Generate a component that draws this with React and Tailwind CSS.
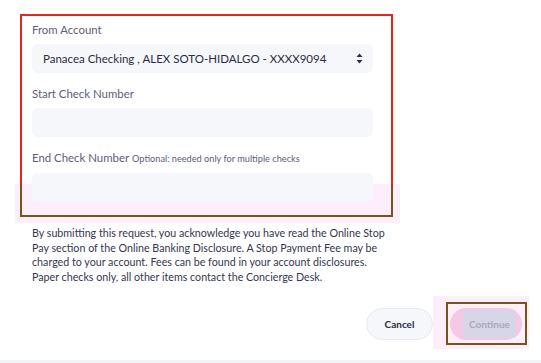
import React from "react";

function Field({ label, hint, children }) {
  return (
    <div className="flex flex-col">
      <label className="text-[11.4px] leading-[16px] text-[#5d6079] mb-[6px] whitespace-nowrap">
        {label}
        {hint && <span className="text-[9.2px] ml-[3px]">{hint}</span>}
      </label>
      {children}
    </div>
  );
}

function Arrows() {
  return (
    <svg width="7" height="11" viewBox="0 0 7 11" className="text-[#2b2e48]">
      <path d="M3.5 0.5 L6.5 4 H0.5 Z" fill="currentColor" />
      <path d="M3.5 10.5 L6.5 7 H0.5 Z" fill="currentColor" />
    </svg>
  );
}

export default function App() {
  return (
    <div
      className="relative w-[541px] h-[363px] bg-white overflow-hidden"
      style={{ fontFamily: "Lato, 'Noto Sans', sans-serif" }}
    >
      {/* annotation tints */}
      <div className="absolute left-[15px] top-[184px] w-[385px] h-[39px] bg-[#fdeefb]" />
      <div className="absolute left-[433px] top-[296px] w-[96px] h-[53px] bg-[#fdeefb]" />

      <div className="relative pl-[32px] pt-[22px] w-[373px] flex flex-col gap-[13px]">
        <Field label="From Account">
          <div className="h-[29px] rounded-[6px] bg-[#f6f7fb] flex items-center justify-between pl-[11px] pr-[10px]">
            <span className="text-[11.5px] text-[#2a2d45] whitespace-nowrap">
              Panacea Checking , ALEX SOTO-HIDALGO - XXXX9094
            </span>
            <Arrows />
          </div>
        </Field>
        <Field label="Start Check Number">
          <div className="h-[29px] rounded-[6px] bg-[#f6f7fb]" />
        </Field>
        <Field label="End Check Number" hint="Optional: needed only for multiple checks">
          <div className="h-[29px] rounded-[6px] bg-[#f6f7fb]" />
        </Field>
      </div>

      <p className="relative mt-[24px] ml-[32px] w-[360px] text-[10.7px] leading-[14.5px] text-[#34374f] whitespace-nowrap">
        By submitting this request, you acknowledge you have read the Online Stop
        <br />
        Pay section of the Online Banking Disclosure. A Stop Payment Fee may be
        <br />
        charged to your account. Fees can be found in your account disclosures.
        <br />
        Paper checks only, all other items contact the Concierge Desk.
      </p>

      <div className="relative mt-[24px] mr-[19px] flex justify-end items-center gap-[17px]">
        <button className="w-[67px] h-[32px] rounded-full bg-[#f6f7fb] border border-[#e9eaf2] text-[10px] font-bold text-[#2a2d45]">
          Cancel
        </button>
        <button className="w-[72px] h-[32px] rounded-full bg-[#f6c8e8] flex items-stretch pl-[13px] pr-[6px] py-[2px]">
          <span className="flex-1 bg-[#d6d6e6] rounded-[3px] flex items-center justify-center text-[10px] font-bold text-[#a8a8c0]">
            Continue
          </span>
        </button>
      </div>

      <div className="absolute left-0 bottom-0 w-full h-[3px] bg-[#f3f3fa]" />

      {/* annotation boxes */}
      <div className="absolute left-[20px] top-[14px] w-[373px] h-[171px] border-2 border-b-0 border-[#e8231e]" />
      <div className="absolute left-[20px] top-[185px] w-[373px] h-[32px] border-2 border-t-0 border-[#7a5416]" />
      <div className="absolute left-[446px] top-[302px] w-[81px] h-[43px] border-2 border-[#7a5416]" />
    </div>
  );
}
